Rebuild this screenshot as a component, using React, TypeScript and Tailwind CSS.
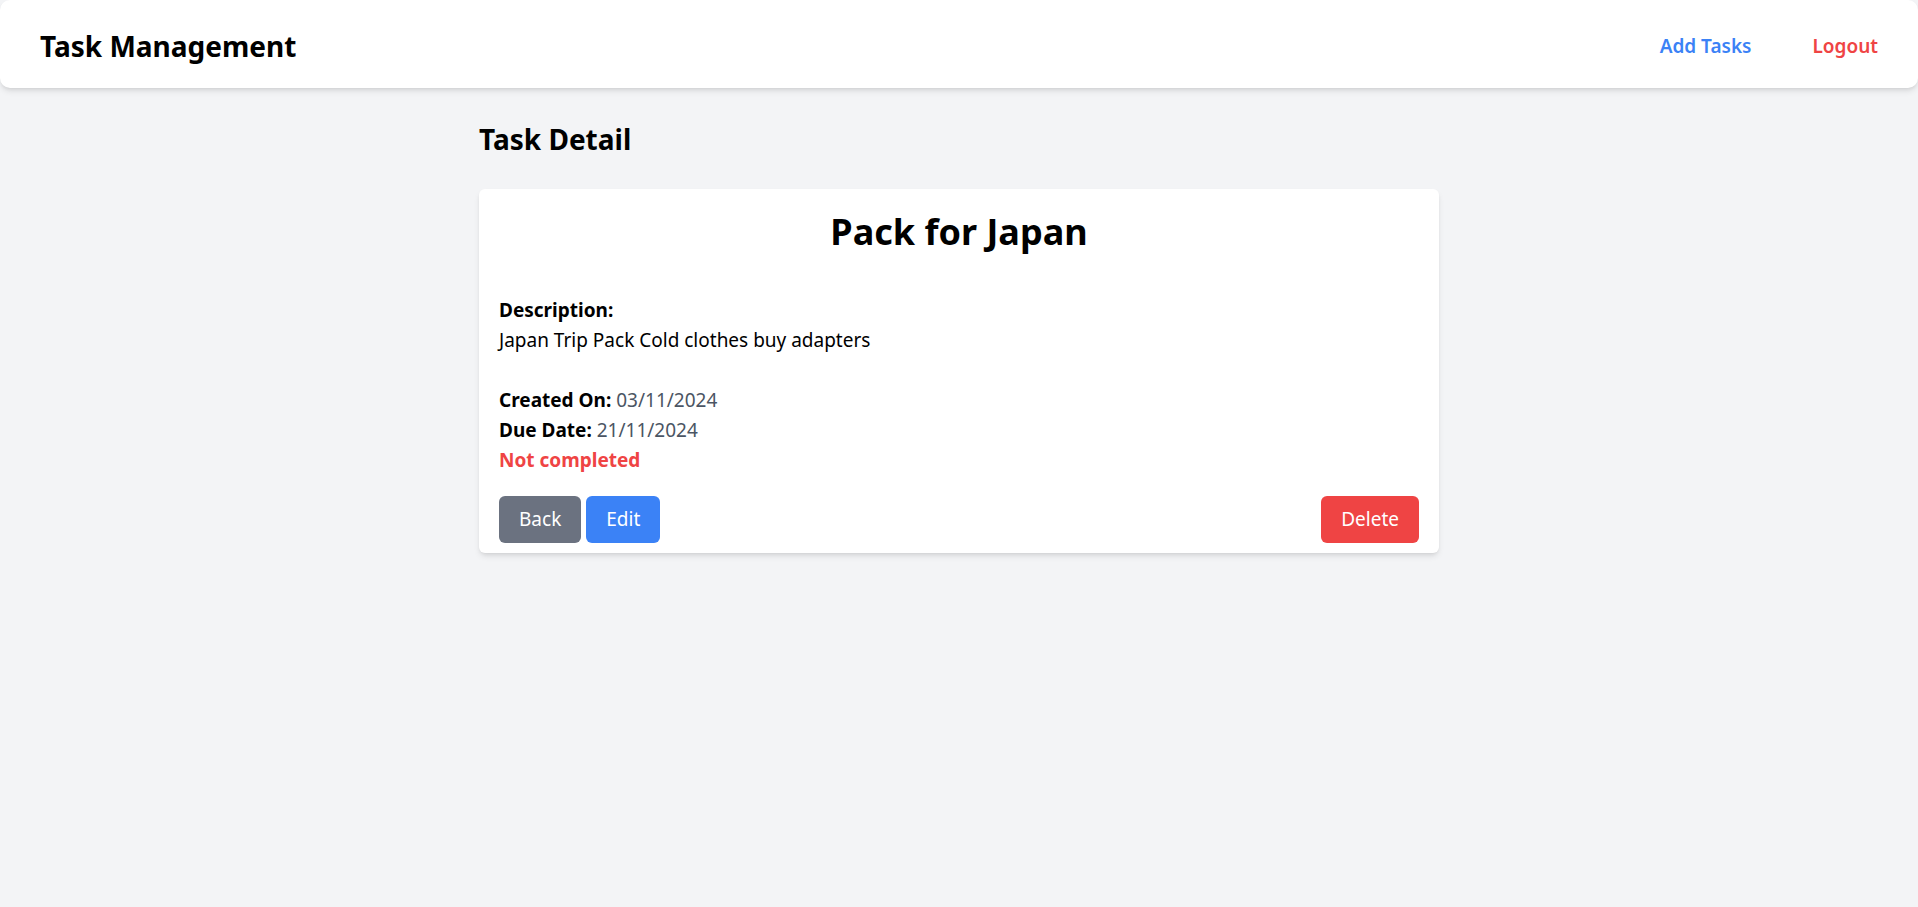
export default function App() {
  return (
    <div className="min-h-screen bg-[#f3f4f6] font-['Noto_Sans',sans-serif] text-black">
      <header className="flex h-[88px] items-center justify-between rounded-[10px] bg-white px-[40px] pt-[4px] shadow-md">
        <h1 className="text-[28px] font-bold leading-[40px]">Task Management</h1>
        <nav className="flex items-center gap-[61px] text-[19px] font-semibold">
          <a href="#" className="text-[#3b82f6]">
            Add Tasks
          </a>
          <a href="#" className="text-[#ef4444]">
            Logout
          </a>
        </nav>
      </header>

      <main className="mx-auto w-[960px] pt-[31px]">
        <h2 className="mb-[30px] text-[28px] font-bold leading-[40px]">Task Detail</h2>

        <div className="rounded-[6px] bg-white px-[20px] pt-[20px] pb-[10px] shadow-md">
          <h3 className="mb-[41px] text-center text-[36px] font-bold leading-[45px]">
            Pack for Japan
          </h3>

          <div className="text-[19px] leading-[30px]">
            <p className="font-bold">Description:</p>
            <p className="mb-[30px]">Japan Trip Pack Cold clothes buy adapters</p>

            <p>
              <span className="font-bold">Created On:</span>{" "}
              <span className="text-[#4b5563]">03/11/2024</span>
            </p>
            <p>
              <span className="font-bold">Due Date:</span>{" "}
              <span className="text-[#4b5563]">21/11/2024</span>
            </p>
            <p className="font-bold text-[#ef4444]">Not completed</p>
          </div>

          <div className="mt-[21px] flex items-center justify-between">
            <div className="flex gap-[5px]">
              <button className="h-[47px] rounded-[6px] bg-[#6b7280] px-[20px] text-[19px] text-white">
                Back
              </button>
              <button className="h-[47px] rounded-[6px] bg-[#3b82f6] px-[20px] text-[19px] text-white">
                Edit
              </button>
            </div>
            <button className="h-[47px] rounded-[6px] bg-[#ef4444] px-[20px] text-[19px] text-white">
              Delete
            </button>
          </div>
        </div>
      </main>
    </div>
  );
}
